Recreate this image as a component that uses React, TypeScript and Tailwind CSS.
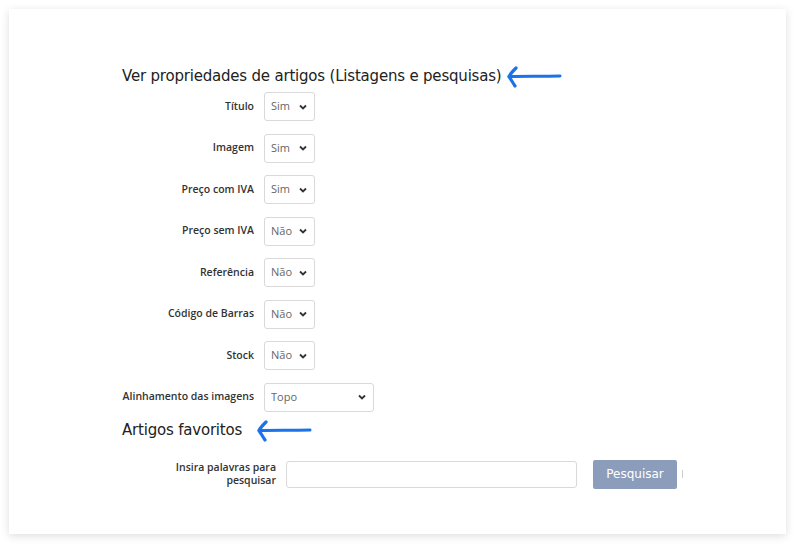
import { useState } from 'react'

const labelFont = { fontFamily: '"Open Sans", "Liberation Sans", sans-serif' }
const headFont = { fontFamily: '"DejaVu Sans", "Open Sans", sans-serif' }

const Chevron = () => (
    <svg
        width="8"
        height="6"
        viewBox="0 0 8 6"
        className="pointer-events-none absolute right-[8px] top-1/2 -translate-y-1/2"
    >
        <path d="M1 1.5 L4 4.5 L7 1.5" fill="none" stroke="#333" strokeWidth="1.8" />
    </svg>
)

const Arrow = ({ className }: { className: string }) => (
    <svg width="56" height="22" viewBox="0 0 56 22" className={className}>
        <path
            d="M3 10.5 C 18 10, 36 10.5, 54 10"
            fill="none"
            stroke="#1a73e8"
            strokeWidth="3"
            strokeLinecap="round"
        />
        <path
            d="M10 2 C 7 5, 4 8, 3 10.5 C 5 13.5, 7 17, 9 20"
            fill="none"
            stroke="#1a73e8"
            strokeWidth="3.2"
            strokeLinecap="round"
            strokeLinejoin="round"
        />
    </svg>
)

type Row = { label: string; value: string; options: string[]; wide?: boolean }

const rows: Row[] = [
    { label: 'Título', value: 'Sim', options: ['Sim', 'Não'] },
    { label: 'Imagem', value: 'Sim', options: ['Sim', 'Não'] },
    { label: 'Preço com IVA', value: 'Sim', options: ['Sim', 'Não'] },
    { label: 'Preço sem IVA', value: 'Não', options: ['Sim', 'Não'] },
    { label: 'Referência', value: 'Não', options: ['Sim', 'Não'] },
    { label: 'Código de Barras', value: 'Não', options: ['Sim', 'Não'] },
    { label: 'Stock', value: 'Não', options: ['Sim', 'Não'] },
    {
        label: 'Alinhamento das imagens',
        value: 'Topo',
        options: ['Topo', 'Centro', 'Fundo'],
        wide: true,
    },
]

const SelectRow = ({ row }: { row: Row }) => {
    const [value, setValue] = useState(row.value)
    return (
        <div className="flex items-center h-[29px]">
            <label
                className="w-[142px] pr-[10px] text-right text-[10.5px] font-semibold text-[#333] whitespace-nowrap"
                style={labelFont}
            >
                {row.label}
            </label>
            <div className={`relative ${row.wide ? 'w-[110px]' : 'w-[51px]'}`}>
                <select
                    value={value}
                    onChange={e => setValue(e.target.value)}
                    className="appearance-none w-full h-[29px] rounded-[3px] border border-[#d9d9d9] bg-white pl-[6px] text-[11px] text-[#666] outline-none"
                    style={labelFont}
                >
                    {row.options.map(o => (
                        <option key={o}>{o}</option>
                    ))}
                </select>
                <Chevron />
            </div>
        </div>
    )
}

const App = () => {
    return (
        <div className="w-[800px] h-[548px] bg-white pt-[9px] pl-[9px]">
            <div className="w-[777px] h-[525px] bg-white shadow-[0_2px_8px_rgba(60,70,90,0.18)] pl-[113px] pt-[56px]">
                <div className="flex items-center h-[22px]">
                    <h2 className="text-[15px] text-[#222] tracking-[-0.2px]" style={headFont}>
                        Ver propriedades de artigos (Listagens e pesquisas)
                    </h2>
                    <Arrow className="ml-[5px] mt-[2px]" />
                </div>
                <div className="mt-[5px] flex flex-col gap-[12.5px]">
                    {rows.map(r => (
                        <SelectRow key={r.label} row={r} />
                    ))}
                </div>
                <div className="flex items-center h-[22px] mt-[8px]">
                    <h2 className="text-[15px] text-[#222] tracking-[-0.2px]" style={headFont}>
                        Artigos favoritos
                    </h2>
                    <Arrow className="ml-[14px] mt-[1px]" />
                </div>
                <div className="flex items-center mt-[18px]">
                    <label
                        className="w-[164px] pr-[10px] text-right text-[10.5px] leading-[13px] font-semibold text-[#333]"
                        style={labelFont}
                    >
                        Insira palavras para
                        <br />
                        pesquisar
                    </label>
                    <input
                        type="text"
                        className="w-[291px] h-[27px] rounded-[3px] border border-[#d9d9d9] bg-white outline-none"
                    />
                    <button
                        className="ml-[16px] w-[84px] h-[29px] rounded-[2px] bg-[#8c9dbb] text-white text-[12px]"
                        style={headFont}
                    >
                        Pesquisar
                    </button>
                    <span className="ml-[5px] w-px h-[8px] bg-[#ccc]" />
                </div>
            </div>
        </div>
    )
}

export default App
